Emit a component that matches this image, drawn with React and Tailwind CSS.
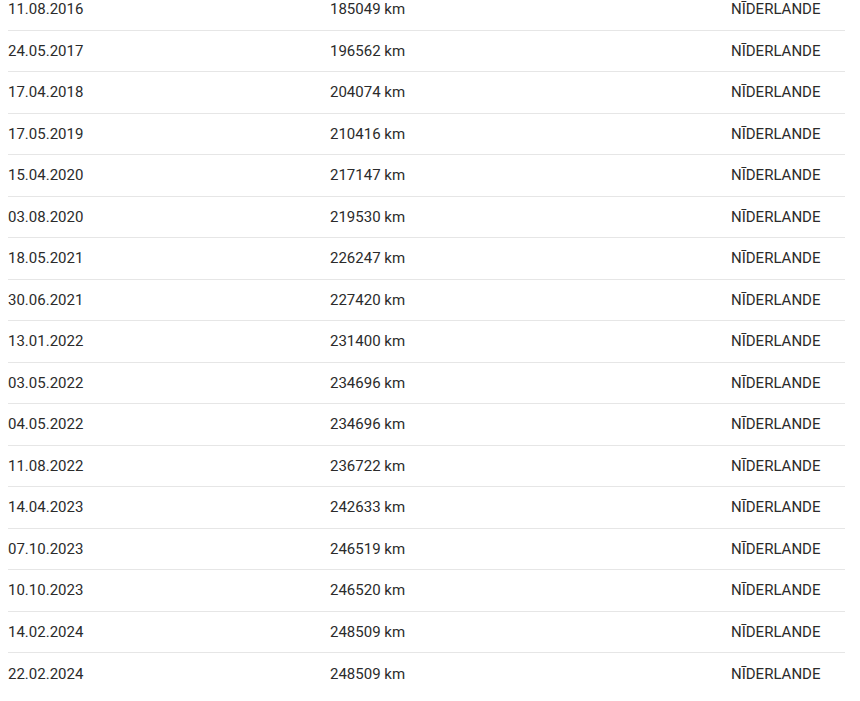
const rows = [
  ["11.08.2016", "185049 km"],
  ["24.05.2017", "196562 km"],
  ["17.04.2018", "204074 km"],
  ["17.05.2019", "210416 km"],
  ["15.04.2020", "217147 km"],
  ["03.08.2020", "219530 km"],
  ["18.05.2021", "226247 km"],
  ["30.06.2021", "227420 km"],
  ["13.01.2022", "231400 km"],
  ["03.05.2022", "234696 km"],
  ["04.05.2022", "234696 km"],
  ["11.08.2022", "236722 km"],
  ["14.04.2023", "242633 km"],
  ["07.10.2023", "246519 km"],
  ["10.10.2023", "246520 km"],
  ["14.02.2024", "248509 km"],
  ["22.02.2024", "248509 km"],
];

export default function App() {
  return (
    <div className="w-[860px] h-[701px] overflow-hidden bg-white">
      <div
        className="mt-[-11px] ml-[8px] w-[837px] text-[15px] text-[#2b2b2b]"
        style={{ fontFamily: "Roboto, 'Noto Sans', sans-serif" }}
      >
        {rows.map(([d, km], i) => (
          <div
            key={i}
            className={`flex items-center h-[41.5px] ${i < rows.length - 1 ? "border-b border-[#e6e6e6]" : ""}`}
          >
            <div className="w-[322px]">{d}</div>
            <div className="w-[401px]">{km}</div>
            <div>NĪDERLANDE</div>
          </div>
        ))}
      </div>
    </div>
  );
}
